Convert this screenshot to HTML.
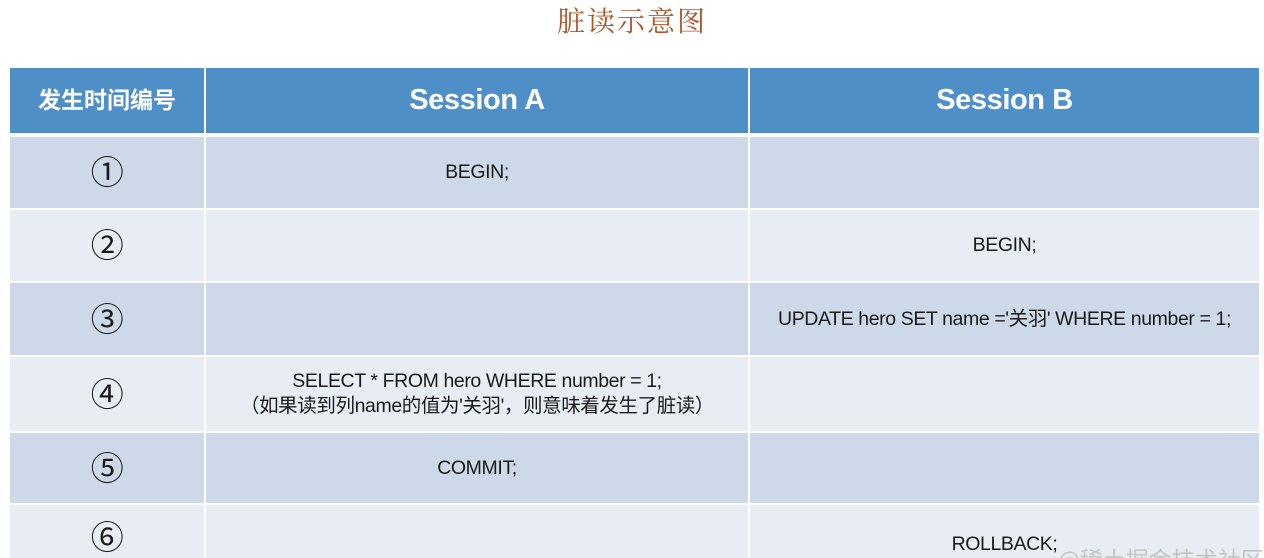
<!DOCTYPE html>
<html style="overflow:hidden;height:558px"><head><meta charset="utf-8"><style>
body{margin:0;width:1264px;height:558px;background:#fff;overflow:hidden;position:relative;font-family:"Liberation Sans","Noto Sans CJK SC",sans-serif}
.c{position:absolute;display:flex;align-items:center;justify-content:center;text-align:center;color:#1a1a1a;font-size:19.5px;line-height:25px;letter-spacing:-0.4px;white-space:nowrap}
.h{background:#4f8fc8;color:#fff;font-weight:bold}
.d{background:#cdd9e8}.l{background:#e8edf4}
.n{font-size:33px}
</style></head><body>
<div style="position:absolute;left:0;width:1264px;top:0px;text-align:center;font-family:'Noto Serif CJK SC',serif;font-size:28px;color:#b0552a;letter-spacing:2px">脏读示意图</div>

<div class="c h" style="left:10px;top:68px;width:194px;height:65px;font-size:23px;letter-spacing:0">发生时间编号</div>
<div class="c h" style="left:206px;top:68px;width:542px;height:65px;font-size:29px">Session A</div>
<div class="c h" style="left:750px;top:68px;width:509px;height:65px;font-size:29px">Session B</div>

<div class="c d n" style="left:10px;top:137px;width:194px;height:71px">①</div>
<div class="c d" style="left:206px;top:137px;width:542px;height:71px">BEGIN;</div>
<div class="c d" style="left:750px;top:137px;width:509px;height:71px"></div>

<div class="c l n" style="left:10px;top:210px;width:194px;height:71px">②</div>
<div class="c l" style="left:206px;top:210px;width:542px;height:71px"></div>
<div class="c l" style="left:750px;top:210px;width:509px;height:71px">BEGIN;</div>

<div class="c d n" style="left:10px;top:283px;width:194px;height:72px">③</div>
<div class="c d" style="left:206px;top:283px;width:542px;height:72px"></div>
<div class="c d" style="left:750px;top:283px;width:509px;height:72px">UPDATE hero SET name ='关羽' WHERE number = 1;</div>

<div class="c l n" style="left:10px;top:357px;width:194px;height:74px">④</div>
<div class="c l" style="left:206px;top:357px;width:542px;height:74px">SELECT * FROM hero WHERE number = 1;<br>（如果读到列name的值为'关羽'，则意味着发生了脏读）</div>
<div class="c l" style="left:750px;top:357px;width:509px;height:74px"></div>

<div class="c d n" style="left:10px;top:433px;width:194px;height:70px">⑤</div>
<div class="c d" style="left:206px;top:433px;width:542px;height:70px">COMMIT;</div>
<div class="c d" style="left:750px;top:433px;width:509px;height:70px"></div>

<div class="c l n" style="left:10px;top:505px;width:194px;height:53px;align-items:flex-start;padding-top:20px;box-sizing:border-box">⑥</div>
<div class="c l" style="left:206px;top:505px;width:542px;height:53px"></div>
<div class="c l" style="left:750px;top:505px;width:509px;height:53px;align-items:flex-start;padding-top:27px;box-sizing:border-box">ROLLBACK;</div>
<div style="position:absolute;left:1058px;top:541px;font-size:23px;color:#c4c4c4;font-family:'Noto Sans CJK SC',sans-serif;white-space:nowrap">@稀土掘金技术社区</div>
</body></html>
